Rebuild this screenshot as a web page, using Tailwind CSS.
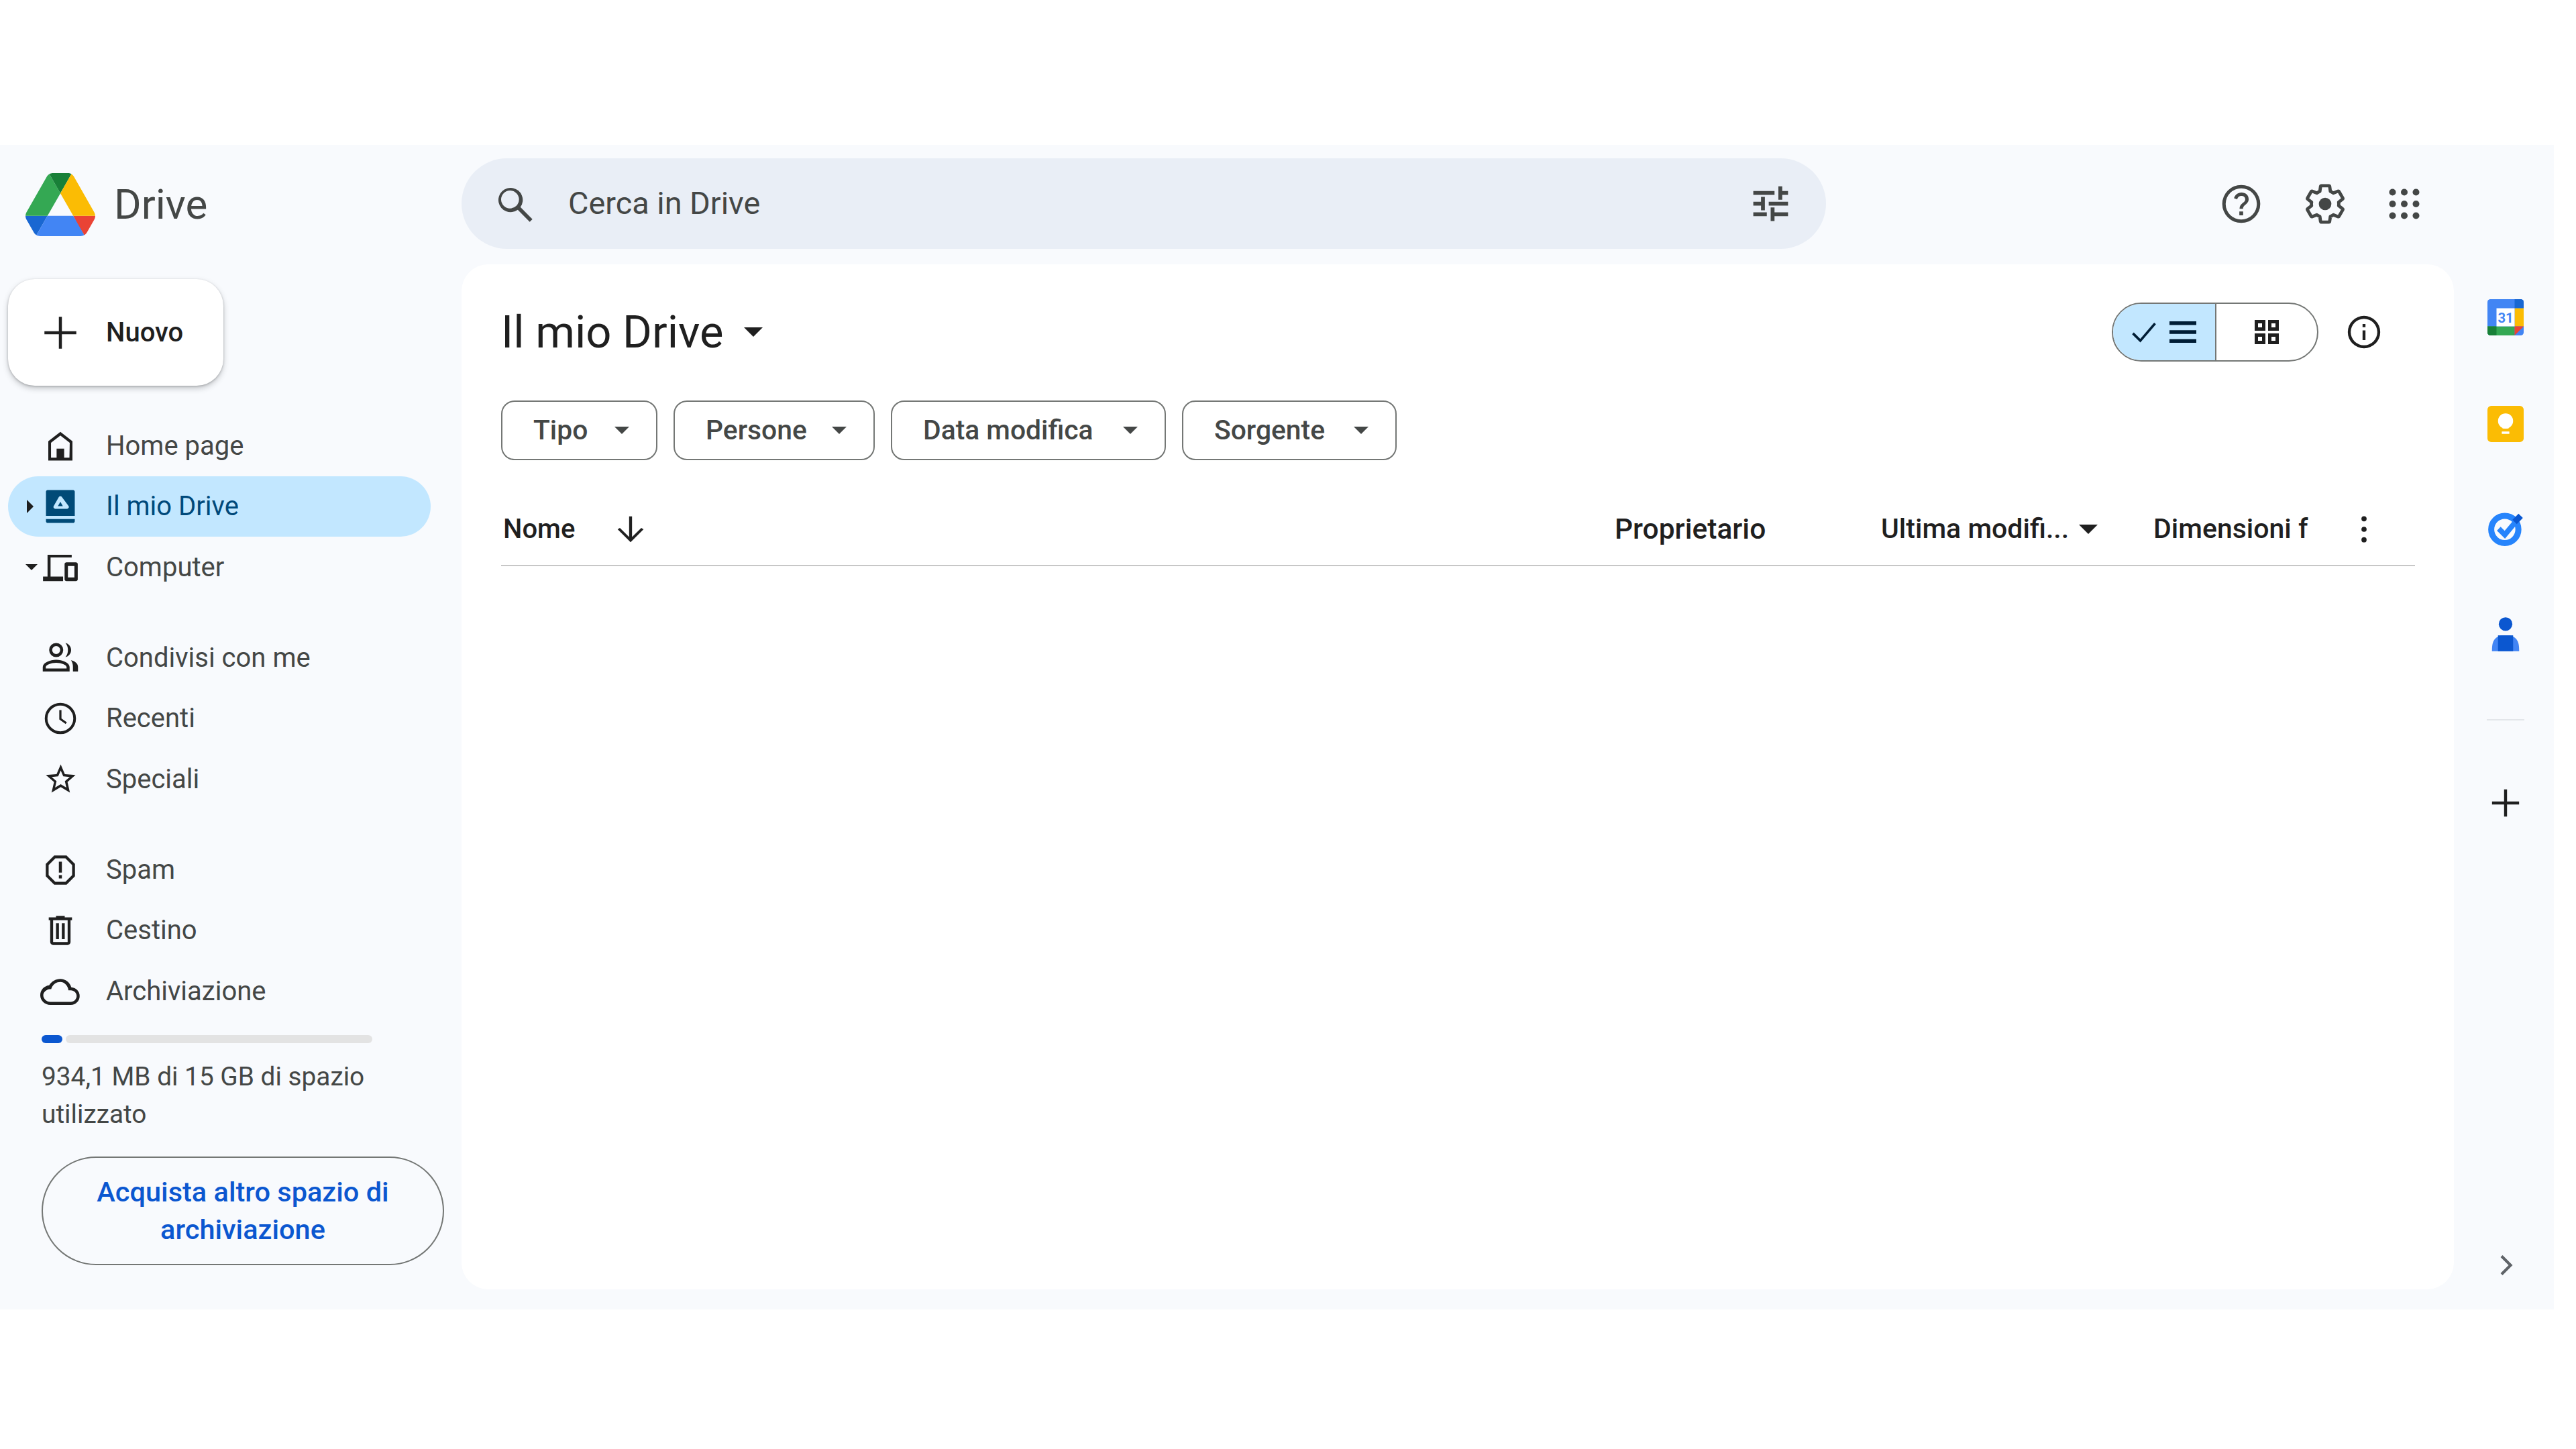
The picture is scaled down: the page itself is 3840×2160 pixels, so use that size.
<!DOCTYPE html>
<html lang="it"><head><meta charset="utf-8"><title>Drive</title>
<script src="https://cdn.jsdelivr.net/npm/@tailwindcss/browser@4"></script></head>
<body class="bg-white font-['Roboto',sans-serif]">
<div class="w-[3840px] h-[2160px] bg-white pt-[216px] overflow-hidden">
<div class="w-[3807px] h-[1736px] bg-[#f8fafd] flex">
  <!-- Sidebar -->
  <aside class="w-[688px] shrink-0 flex flex-col">
    <div class="h-[178px] pl-[38px] flex items-center gap-[28px]">
      <svg class="w-[104px] h-[94px]" viewBox="0 0 87.3 78" preserveAspectRatio="none"><path d="m6.6 66.85 3.85 6.65c.8 1.4 1.95 2.5 3.3 3.3l13.75-23.8h-27.5c0 1.55.4 3.1 1.2 4.5z" fill="#1967d2"/><path d="m43.65 25-13.75-23.8c-1.35.8-2.5 1.9-3.3 3.3l-25.4 44a9.06 9.06 0 0 0 -1.2 4.5h27.5z" fill="#34a853"/><path d="m73.55 76.8c1.35-.8 2.5-1.9 3.3-3.3l1.6-2.75 7.65-13.25c.8-1.4 1.2-2.95 1.2-4.5h-27.502l5.852 11.5z" fill="#ea4335"/><path d="m43.65 25 13.75-23.8c-1.35-.8-2.9-1.2-4.5-1.2h-18.5c-1.6 0-3.15.45-4.5 1.2z" fill="#188038"/><path d="m59.8 53h-32.3l-13.75 23.8c1.35.8 2.9 1.2 4.5 1.2h50.8c1.6 0 3.15-.45 4.5-1.2z" fill="#4285f4"/><path d="m73.4 26.5-12.7-22c-.8-1.4-1.95-2.5-3.3-3.3l-13.75 23.8 16.15 28h27.45c0-1.55-.4-3.1-1.2-4.5z" fill="#fbbc04"/></svg>
      <span class="text-[62px] leading-none text-[#444746]">Drive</span>
    </div>
    <div class="pl-[12px] pt-[22px]">
      <div class="w-[321px] h-[159px] bg-white rounded-[40px] shadow-[0_4px_8px_rgba(60,64,67,0.28),0_1px_3px_rgba(60,64,67,0.3)] flex items-center pl-[48px] gap-[38px]">
        <svg class="w-[60px] h-[60px]" viewBox="0 0 24 24" fill="none" stroke="#1f1f1f" stroke-width="1.8"><path d="M12 2.5v19M2.5 12h19"/></svg>
        <span class="text-[40px] font-medium text-[#1f1f1f]">Nuovo</span>
      </div>
    </div>
    <nav class="pl-[12px] pt-[44px] text-[40px] text-[#444746]">
      <div class="h-[91px] flex items-center"><span class="w-[48px]"></span><span class="w-[60px] flex justify-center"><svg class="w-[60px] h-[54px]" viewBox="0 0 24 24" fill="#1f1f1f"><path d="M12 2.5 4 8.8V21.500h16V8.800zM18 19.700h-3.500v-6h-5v6H5.800V9.800L12 5l6.200 4.800z"/></svg></span><span class="ml-[38px]">Home page</span></div>
      <div class="w-[630px] h-[90px] rounded-full bg-[#c2e7ff] text-[#00497a] flex items-center"><span class="w-[48px] flex justify-end pr-[10px]"><svg class="w-[10px] h-[20px]" viewBox="0 0 10 20"><path d="M0 0l10 10L0 20z" fill="#1f1f1f"/></svg></span><span class="w-[60px] flex justify-center"><svg class="w-[56px] h-[56px]" viewBox="0 0 24 24"><path fill="#004a77" d="M2.800 2.500c0-.5.500-1 1-1h16.400c.5 0 1 .5 1 1V18H2.800zM2.800 20h18.400v1.500c0 .5-.5 1-1 1H3.800c-.5 0-1-.5-1-1z"/><path fill="#c2e7ff" d="M12 5.500c-.4 0-.8.2-1 .5l-3.300 5.800c-.3.5-.1 1.200.5 1.500l.4.200h7.800l.4-.2c.6-.3.8-1 .5-1.500L13 6c-.2-.3-.6-.5-1-.5zM12 9l1.600 2.800h-3.200z"/></svg></span><span class="ml-[38px]">Il mio Drive</span></div>
      <div class="h-[91px] flex items-center"><span class="w-[48px] flex justify-end pr-[4px]"><svg class="w-[18px] h-[9px]" viewBox="0 0 20 10"><path d="M0 0h20L10 10z" fill="#1f1f1f"/></svg></span><span class="w-[60px] flex justify-center"><svg class="w-[60px] h-[54px]" viewBox="0 0 24 24" fill="#1f1f1f"><path d="M3.500 3.500h16v1.800H5.500V18h8.300v3H.500v-3h3zM16 8.500h6.300c.6 0 1.200.5 1.200 1.100v10.300c0 .6-.6 1.100-1.200 1.100H16c-.6 0-1.200-.5-1.200-1.100V9.600c0-.6.600-1.100 1.200-1.100zm1 2.500v7.500h4.300V11z"/></svg></span><span class="ml-[38px]">Computer</span></div>
      <div class="h-[44px]"></div>
      <div class="h-[91px] flex items-center"><span class="w-[48px]"></span><span class="w-[60px] flex justify-center"><svg class="w-[60px] h-[60px]" viewBox="0 0 24 24" fill="#1f1f1f"><path d="M9.500 3a4.200 4.200 0 1 1 0 8.400 4.200 4.200 0 0 1 0-8.400zm0 1.800a2.400 2.400 0 1 0 0 4.800 2.400 2.400 0 0 0 0-4.800zM9.500 13c3.500 0 8 1.700 8 4.300V20H1.500v-2.700C1.500 14.700 6 13 9.500 13zm0 1.800c-3 0-6.200 1.400-6.200 2.500v.9h12.400v-.9c0-1.100-3.200-2.500-6.200-2.500zM15 3c2 .4 3.400 2.100 3.400 4.200S17 11 15 11.400c1-1.100 1.500-2.600 1.500-4.200S16 4.100 15 3zM18.300 13.300c2.300.5 4.200 1.800 4.200 4V20h-3v-2.700c0-1.600-.4-3-1.200-4z"/></svg></span><span class="ml-[38px]">Condivisi con me</span></div>
      <div class="h-[90px] flex items-center"><span class="w-[48px]"></span><span class="w-[60px] flex justify-center"><svg class="w-[60px] h-[60px]" viewBox="0 0 24 24" fill="none" stroke="#1f1f1f" stroke-width="1.600"><circle cx="12" cy="12" r="8.500"/><path d="M12 7v5.300l3.500 2.500" stroke-width="1.300"/></svg></span><span class="ml-[38px]">Recenti</span></div>
      <div class="h-[91px] flex items-center"><span class="w-[48px]"></span><span class="w-[60px] flex justify-center"><svg class="w-[53px] h-[53px]" viewBox="0 0 24 24" fill="#1f1f1f"><path d="m22 9.200-7.200-.6L12 2 9.200 8.600 2 9.200l5.500 4.700L5.800 21l6.200-3.700 6.200 3.700-1.600-7.100zM12 15.400l-3.800 2.300 1-4.300-3.300-2.900 4.400-.4 1.700-4 1.700 4 4.400.4-3.300 2.900 1 4.300z"/></svg></span><span class="ml-[38px]">Speciali</span></div>
      <div class="h-[44px]"></div>
      <div class="h-[91px] flex items-center"><span class="w-[48px]"></span><span class="w-[60px] flex justify-center"><svg class="w-[60px] h-[60px]" viewBox="0 0 24 24" fill="#1f1f1f"><path d="M15.700 3.300H8.300L3.300 8.300v7.400l5 5h7.400l5-5V8.300zM19 15 15 19H9L5 15V9l4-4h6l4 4zM11.100 7h1.800v6.500h-1.800zM11.100 15h1.800v2h-1.800z"/></svg></span><span class="ml-[38px]">Spam</span></div>
      <div class="h-[90px] flex items-center"><span class="w-[48px]"></span><span class="w-[60px] flex justify-center"><svg class="w-[52px] h-[52px]" viewBox="0 0 24 24" fill="#1f1f1f"><path d="M15 3V2H9v1H4v2h1v15c0 1.100.9 2 2 2h10c1.100 0 2-.9 2-2V5h1V3zm2 17H7V5h10zM9 7h2v11H9zM13 7h2v11h-2z"/></svg></span><span class="ml-[38px]">Cestino</span></div>
      <div class="h-[91px] flex items-center"><span class="w-[48px]"></span><span class="w-[60px] flex justify-center"><svg class="w-[60px] h-[60px]" viewBox="0 0 24 24" fill="#1f1f1f"><path d="M12 4.500c3 0 5.700 2 6.500 5 2.800.2 5 2.400 5 5.200 0 2.900-2.300 5.300-5.300 5.300H6c-3.300 0-6-2.600-6-5.800 0-3.100 2.300-5.500 5.300-5.900C6.700 6.100 9.100 4.500 12 4.500zm0 1.800c-2.300 0-4.200 1.300-5.200 3.500l-.3.800h-.8C3.600 10.800 1.800 12.500 1.800 14.200c0 2.100 2 4 4.200 4h12.200c1.900 0 3.500-1.600 3.500-3.500s-1.600-3.400-3.500-3.400h-1.400l-.2-1.100C16 8.200 14.200 6.300 12 6.300z"/></svg></span><span class="ml-[38px]">Archiviazione</span></div>
    </nav>
    <div class="pl-[62px] pt-[20px]">
      <div class="w-[493px] h-[12px] flex gap-[5px]"><div class="w-[31px] rounded-full bg-[#0b57d0]"></div><div class="flex-1 rounded-full bg-[#e3e3e3]"></div></div>
      <p class="mt-[22px] w-[520px] text-[38.8px] leading-[56px] text-[#444746]">934,1 MB di 15 GB di spazio utilizzato</p>
      <div class="mt-[35px] w-[600px] h-[162px] rounded-full border-2 border-[#747775] flex items-center justify-center text-center text-[41.5px] leading-[56px] font-medium text-[#0b57d0]"><span>Acquista altro spazio di<br>archiviazione</span></div>
    </div>
  </aside>
  <!-- Main -->
  <div class="flex-1 flex flex-col">
    <header class="h-[178px] flex items-start">
      <div class="mt-[20px] w-[2034px] h-[135px] rounded-full bg-[#e9eef6] flex items-center pl-[47px] pr-[48px]">
        <svg class="w-[64px] h-[64px]" viewBox="0 0 24 24" fill="#444746"><path d="M20.500 22 13.800 15.300a6.800 6.800 0 1 1 1.500-1.500L22 20.500zM9.500 14.500a5 5 0 1 0 0-10 5 5 0 0 0 0 10z"/></svg>
        <span class="ml-[48px] text-[46.8px] text-[#444746]">Cerca in Drive</span>
        <svg class="ml-auto w-[69px] h-[69px]" viewBox="0 0 24 24" fill="#444746"><path d="M3 5.500h11v2H3zM16 3h2v2.500h3v2h-3V10h-2zM3 11h4V8.500h2v7H7V13H3zM11 11h10v2H11zM3 16.500h7v2H3zM12 14h2v2.500h7v2h-7V21h-2z"/></svg>
      </div>
      <div class="ml-[585px] mt-[20px] h-[135px] flex items-center">
        <svg class="w-[68px] h-[68px]" viewBox="0 0 24 24" fill="#444746"><path d="M12 2a10 10 0 1 0 0 20 10 10 0 0 0 0-20zm0 18.200a8.200 8.200 0 1 1 0-16.400 8.200 8.200 0 0 1 0 16.400zM11 16h2v2h-2zM12.100 6c-2 0-3.500 1.300-3.900 3l1.700.6c.2-1 1-1.800 2.200-1.800 1.200 0 2 .8 2 1.800 0 2-3 1.800-3 5h1.800c0-2.200 3-2.500 3-5C16 7.400 14.300 6 12.100 6z"/></svg>
        <svg class="ml-[57px] w-[68px] h-[68px]" viewBox="0 0 24 24"><path fill="none" stroke="#444746" stroke-width="1.700" stroke-linejoin="round" d="M19.140 12.940c.04-.3.06-.61.06-.94 0-.32-.02-.64-.07-.94l2.030-1.580c.18-.14.23-.41.12-.61l-1.920-3.320c-.12-.22-.37-.29-.59-.22l-2.390.96c-.5-.38-1.030-.7-1.620-.94l-.36-2.540c-.04-.24-.24-.41-.48-.41h-3.840c-.24 0-.43.17-.47.41l-.36 2.540c-.59.24-1.130.57-1.620.94l-2.390-.96c-.22-.08-.47 0-.59.22L2.740 8.870c-.12.21-.08.47.12.61l2.030 1.580c-.05.3-.09.63-.09.94s.02.64.07.94l-2.030 1.580c-.18.14-.23.41-.12.61l1.920 3.320c.12.22.37.29.59.22l2.390-.96c.5.38 1.030.7 1.620.94l.36 2.540c.05.24.24.41.48.41h3.840c.24 0 .44-.17.47-.41l.36-2.540c.59-.24 1.130-.56 1.620-.94l2.390.96c.22.08.47 0 .59-.22l1.920-3.320c.12-.22.07-.47-.12-.61z"/><circle cx="12" cy="12" r="3.300" fill="#444746"/></svg>
        <svg class="ml-[54px] w-[60px] h-[60px]" viewBox="0 0 24 24" fill="#444746"><circle cx="5" cy="5" r="2"/><circle cx="12" cy="5" r="2"/><circle cx="19" cy="5" r="2"/><circle cx="5" cy="12" r="2"/><circle cx="12" cy="12" r="2"/><circle cx="19" cy="12" r="2"/><circle cx="5" cy="19" r="2"/><circle cx="12" cy="19" r="2"/><circle cx="19" cy="19" r="2"/></svg>
      </div>
    </header>
    <div class="flex flex-1 pb-[30px]">
      <main class="w-[2970px] bg-white rounded-[40px] pl-[59px] pr-[58px]">
        <div class="h-[145px] pt-[57px] flex items-start justify-between">
          <div class="flex items-center h-[88px] gap-[30px]">
            <span class="text-[67px] text-[#1f1f1f]">Il mio Drive</span>
            <svg class="w-[28px] h-[14px]" viewBox="0 0 20 10"><path d="M0 0h20L10 10z" fill="#1f1f1f"/></svg>
          </div>
          <div class="flex items-center mr-[47px]">
            <div class="w-[308px] h-[88px] rounded-full border-2 border-[#747775] flex overflow-hidden">
              <div class="w-[154px] bg-[#c2e7ff] border-r-2 border-[#747775] flex items-center justify-center gap-[12px]">
                <svg class="w-[44px] h-[44px]" viewBox="0 0 24 24" fill="none" stroke="#001d35" stroke-width="2"><path d="M3 13l6 6L21 5"/></svg>
                <svg class="w-[48px] h-[48px]" viewBox="0 0 24 24" fill="#001d35"><path d="M2 4h20v2.800H2zM2 10.600h20v2.800H2zM2 17.200h20V20H2z"/></svg>
              </div>
              <div class="flex-1 flex items-center justify-center">
                <svg class="w-[48px] h-[48px]" viewBox="0 0 24 24" fill="#1f1f1f"><path d="M3 3h8v8H3zm2.500 2.500v3h3v-3zM13 3h8v8h-8zm2.500 2.500v3h3v-3zM3 13h8v8H3zm2.500 2.500v3h3v-3zM13 13h8v8h-8zm2.500 2.500v3h3v-3z"/></svg>
              </div>
            </div>
            <svg class="ml-[39px] w-[58px] h-[58px]" viewBox="0 0 24 24" fill="#1f1f1f"><path d="M12 2a10 10 0 1 0 0 20 10 10 0 0 0 0-20zm0 18.200a8.200 8.200 0 1 1 0-16.400 8.200 8.200 0 0 1 0 16.400zM11.100 11h1.800v6h-1.800zM11.100 7h1.800v2h-1.800z"/></svg>
          </div>
        </div>
        <div class="flex gap-[24px] mt-[58px] text-[40.8px] font-medium text-[#444746]">
          <div class="w-[233px] h-[89px] rounded-[20px] border-2 border-[#747775] flex items-center pl-[46px]"><span>Tipo</span><svg class="ml-auto mr-[40px] w-[22px] h-[11px]" viewBox="0 0 20 10"><path d="M0 0h20L10 10z" fill="#444746"/></svg></div>
          <div class="w-[300px] h-[89px] rounded-[20px] border-2 border-[#747775] flex items-center pl-[46px]"><span>Persone</span><svg class="ml-auto mr-[40px] w-[22px] h-[11px]" viewBox="0 0 20 10"><path d="M0 0h20L10 10z" fill="#444746"/></svg></div>
          <div class="w-[410px] h-[89px] rounded-[20px] border-2 border-[#747775] flex items-center pl-[46px]"><span>Data modifica</span><svg class="ml-auto mr-[40px] w-[22px] h-[11px]" viewBox="0 0 20 10"><path d="M0 0h20L10 10z" fill="#444746"/></svg></div>
          <div class="w-[320px] h-[89px] rounded-[20px] border-2 border-[#747775] flex items-center pl-[46px]"><span>Sorgente</span><svg class="ml-auto mr-[40px] w-[22px] h-[11px]" viewBox="0 0 20 10"><path d="M0 0h20L10 10z" fill="#444746"/></svg></div>
        </div>
        <div class="mt-[60px] h-[98px] pb-[10px] border-b-2 border-[#c7c7c7] flex items-center text-[41px] font-medium text-[#1f1f1f] whitespace-nowrap">
          <span class="w-[111px] ml-[3px] text-[40px]">Nome</span>
          <svg class="ml-[50px] w-[58px] h-[58px]" viewBox="0 0 24 24" fill="#1f1f1f"><path d="M11.100 4h1.800v12.800l5.700-5.600L20 12l-8 8-8-8 1.400-.8 5.700 5.600z"/></svg>
          <span class="ml-[1438px] w-[397px] text-[42.500px]">Proprietario</span>
          <span class="w-[295px]">Ultima modifi...</span>
          <svg class="w-[28px] h-[14px] mr-[83px]" viewBox="0 0 20 10"><path d="M0 0h20L10 10z" fill="#1f1f1f"/></svg>
          <span class="w-[232px] overflow-hidden">Dimensioni f</span>
          <svg class="ml-[53px] w-[58px] h-[58px]" viewBox="0 0 24 24" fill="#1f1f1f"><circle cx="12" cy="5.500" r="1.600"/><circle cx="12" cy="12" r="1.600"/><circle cx="12" cy="18.500" r="1.600"/></svg>
        </div>
      </main>
      <aside class="flex-1 flex flex-col items-center pt-[52px] pl-[5px]">
        <svg class="w-[54px] h-[54px]" viewBox="0 0 24 24"><rect x="0" y="0" width="24" height="24" rx="2" fill="#4285f4"/><path d="M18 0h4a2 2 0 0 1 2 2v4h-6z" fill="#1967d2"/><path d="M18 6h6v12h-6z" fill="#fbbc04"/><path d="M0 18h18v6H2a2 2 0 0 1-2-2z" fill="#34a853"/><path d="M0 18h6v6H2a2 2 0 0 1-2-2z" fill="#188038"/><path d="M18 18h6l-6 6z" fill="#ea4335"/><rect x="6" y="6" width="12" height="12" fill="#fff"/><text x="12" y="15.500" text-anchor="middle" font-size="9" font-weight="700" fill="#4285f4" font-family="Roboto">31</text></svg>
        <svg class="mt-[105px] w-[54px] h-[54px]" viewBox="0 0 24 24"><rect width="24" height="24" rx="2.500" fill="#fbbc04"/><circle cx="12" cy="10" r="5" fill="#fff"/><path d="M10 12h4v3h-4zM9.500 17h5v1.500h-5z" fill="#fff"/></svg>
        <svg class="mt-[101px] w-[54px] h-[54px]" viewBox="0 0 24 24" fill="none"><circle cx="11.500" cy="13" r="9" stroke="#2684fc" stroke-width="4"/><path d="M7.500 12.500l4 4L22 4" stroke="#2684fc" stroke-width="3.500"/><path d="M18 8l4-4" stroke="#0b57d0" stroke-width="4"/></svg>
        <svg class="mt-[105px] w-[54px] h-[54px]" viewBox="0 0 24 24"><circle cx="12" cy="5" r="4.500" fill="#0b57d0"/><path d="M3 23c0-5 .5-9 6-10.500h6c5.500 1.500 6 5.500 6 10.500z" fill="#4285f4"/><path d="M7 23V12.500h10V23z" fill="#0b57d0"/></svg>
        <div class="mt-[99px] w-[56px] h-[2px] bg-[#e3e6ea]"></div>
        <svg class="mt-[101px] w-[44px] h-[44px]" viewBox="0 0 24 24" fill="#1f1f1f"><path d="M10.800 1h2.400v9.800H23v2.400h-9.800V23h-2.400v-9.800H1v-2.400h9.800z"/></svg>
        <svg class="mt-auto mb-[18px] w-[36px] h-[36px]" viewBox="0 0 24 24" fill="#5f6368"><path d="M7 4l2-2 10 10-10 10-2-2 8-8z"/></svg>
      </aside>
    </div>
  </div>
</div>
</div>
</body></html>
